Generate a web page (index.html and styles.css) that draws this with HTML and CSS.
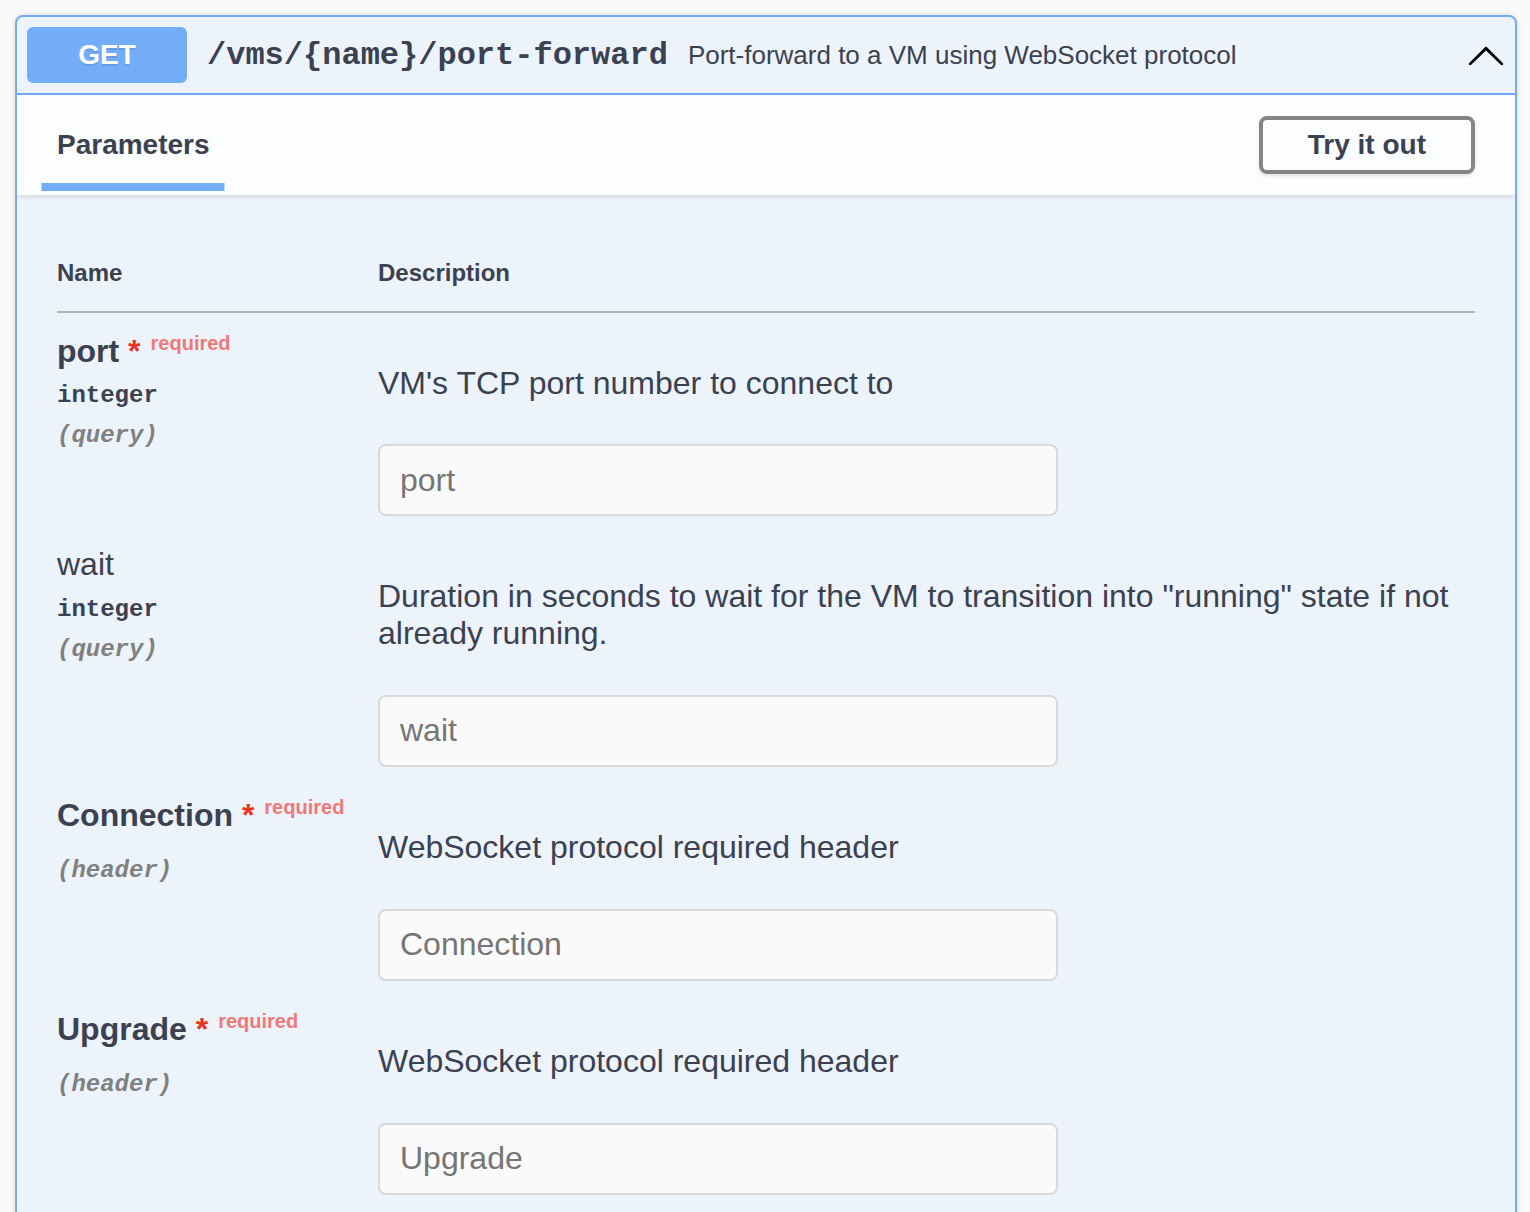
FILE: index.html
```html
<!DOCTYPE html>
<html lang="en">
<head>
<meta charset="utf-8">
<title>GET /vms/{name}/port-forward</title>
<link rel="stylesheet" href="styles.css">
</head>
<body>
<div class="page">
  <div class="opblock">
    <div class="summary">
      <span class="method">GET</span>
      <span class="path">/vms/{name}/port-forward</span>
      <span class="summary-desc">Port-forward to a VM using WebSocket protocol</span>
      <svg class="arrow" viewBox="0 0 20 20" width="40" height="40" aria-hidden="true">
        <path d="M17.418 14.908C17.69 15.176 18.127 15.176 18.397 14.908C18.667 14.64 18.668 14.207 18.397 13.939L10.489 6.109C10.219 5.841 9.782 5.841 9.51 6.109L1.602 13.939C1.332 14.207 1.332 14.64 1.602 14.908C1.873 15.176 2.311 15.176 2.581 14.908L10 7.767L17.418 14.908Z"/>
      </svg>
    </div>
    <div class="section-header">
      <div class="tab"><span class="tab-label">Parameters</span></div>
      <button class="try-out">Try it out</button>
    </div>
    <div class="table-container">
      <table class="params">
        <thead>
          <tr>
            <td class="col-name">Name</td>
            <td class="col-desc">Description</td>
          </tr>
        </thead>
        <tbody>
          <tr>
            <td class="col-name">
              <div class="param-name required">port<span class="star">&nbsp;*</span><span class="req-label">required</span></div>
              <div class="param-type">integer</div>
              <div class="param-in">(query)</div>
            </td>
            <td class="col-desc">
              <p class="desc">VM's TCP port number to connect to</p>
              <input class="param-input" type="text" placeholder="port">
            </td>
          </tr>
          <tr>
            <td class="col-name">
              <div class="param-name">wait</div>
              <div class="param-type">integer</div>
              <div class="param-in">(query)</div>
            </td>
            <td class="col-desc">
              <p class="desc">Duration in seconds to wait for the VM to transition into "running" state if not already running.</p>
              <input class="param-input" type="text" placeholder="wait">
            </td>
          </tr>
          <tr>
            <td class="col-name">
              <div class="param-name required">Connection<span class="star">&nbsp;*</span><span class="req-label">required</span></div>
              <div class="param-type"></div>
              <div class="param-in">(header)</div>
            </td>
            <td class="col-desc">
              <p class="desc">WebSocket protocol required header</p>
              <input class="param-input" type="text" placeholder="Connection">
            </td>
          </tr>
          <tr>
            <td class="col-name">
              <div class="param-name required">Upgrade<span class="star">&nbsp;*</span><span class="req-label">required</span></div>
              <div class="param-type"></div>
              <div class="param-in">(header)</div>
            </td>
            <td class="col-desc">
              <p class="desc">WebSocket protocol required header</p>
              <input class="param-input" type="text" placeholder="Upgrade">
            </td>
          </tr>
        </tbody>
      </table>
    </div>
  </div>
</div>
</body>
</html>
```

FILE: styles.css
```css
html, body {
  margin: 0;
  padding: 0;
  background: #fafafa;
}

body {
  font-family: "Liberation Sans", Arial, sans-serif;
  color: #3b4151;
  line-height: 1.15;
}

.page {
  padding: 15px 13px 0 15px;
}

.opblock {
  border: 2px solid #74aaf5;
  border-radius: 8px;
  background: #edf3fb;
  box-shadow: 0 0 6px rgba(0, 0, 0, 0.12);
  overflow: hidden;
}

.summary {
  display: flex;
  align-items: center;
  padding: 10px;
  border-bottom: 2px solid #74aaf5;
}

.method {
  flex: none;
  width: 160px;
  padding: 12px 0;
  line-height: 32px;
  font-size: 28px;
  font-weight: 700;
  color: #fff;
  text-align: center;
  background: #73acf7;
  border-radius: 6px;
  text-shadow: 0 2px 0 rgba(0, 0, 0, 0.1);
}

.path {
  flex: none;
  padding: 2px 20px 0;
  font-family: "Liberation Mono", "Courier New", monospace;
  font-size: 32px;
  font-weight: 700;
  color: #3b4151;
}

.summary-desc {
  flex: 1;
  padding-top: 2px;
  font-size: 26px;
  color: #3b4151;
}

.arrow {
  flex: none;
  fill: #000;
  margin-right: -1px;
}

.section-header {
  display: flex;
  align-items: center;
  justify-content: space-between;
  min-height: 100px;
  box-sizing: border-box;
  padding: 16px 40px;
  background: rgba(255, 255, 255, 0.8);
  box-shadow: 0 2px 4px rgba(0, 0, 0, 0.1);
  position: relative;
}

.tab {
  display: flex;
}

.tab-label {
  position: relative;
  font-size: 28px;
  font-weight: 700;
  line-height: 32px;
  color: #3b4151;
}

.tab-label::after {
  content: "";
  position: absolute;
  left: 50%;
  bottom: -30px;
  width: 120%;
  height: 8px;
  transform: translateX(-50%);
  background: #73acf7;
}

.try-out {
  font-family: "Liberation Sans", Arial, sans-serif;
  font-size: 28px;
  font-weight: 700;
  line-height: 32px;
  color: #3b4151;
  padding: 9px 45px;
  border: 4px solid #858585;
  border-radius: 8px;
  background: transparent;
  box-shadow: 0 2px 4px rgba(0, 0, 0, 0.1);
}

.table-container {
  padding: 40px;
}

.params {
  width: 100%;
  border-collapse: collapse;
}

.params thead td {
  padding: 24px 0;
  font-size: 24px;
  font-weight: 700;
  color: #3b4151;
  border-bottom: 2px solid #aeb4c1;
  text-align: left;
}

.params .col-name {
  width: 321px;
}

.params tbody td {
  vertical-align: top;
  padding: 20px 0 0;
}

.params tbody td.col-name {
  padding: 20px 0;
}

.param-name {
  font-size: 32px;
  color: #3b4151;
  white-space: nowrap;
}

.param-name.required {
  font-weight: 700;
}

.star {
  color: #eb3323;
}

.req-label {
  position: relative;
  top: -12px;
  padding: 0 10px;
  font-size: 20px;
  color: #ef7979;
}

.param-type {
  padding: 12px 0 10px;
  font-family: "Liberation Mono", "Courier New", monospace;
  font-size: 24px;
  font-weight: 700;
  line-height: 30px;
  color: #3b4151;
}

.param-in {
  font-family: "Liberation Mono", "Courier New", monospace;
  font-size: 24px;
  font-weight: 700;
  font-style: italic;
  line-height: 30px;
  color: #808080;
}

.desc {
  margin: 32px 0 43px;
  font-size: 32px;
  color: #3b4151;
}

.param-input {
  display: block;
  box-sizing: border-box;
  width: 680px;
  height: 72px;
  margin: 10px 0;
  padding: 16px 20px;
  font-family: "Liberation Sans", Arial, sans-serif;
  font-size: 32px;
  color: #3b4151;
  background: #fafafa;
  border: 2px solid #d9d9d9;
  border-radius: 8px;
  outline: none;
}

.param-input::placeholder {
  color: #757575;
  opacity: 1;
}
```
